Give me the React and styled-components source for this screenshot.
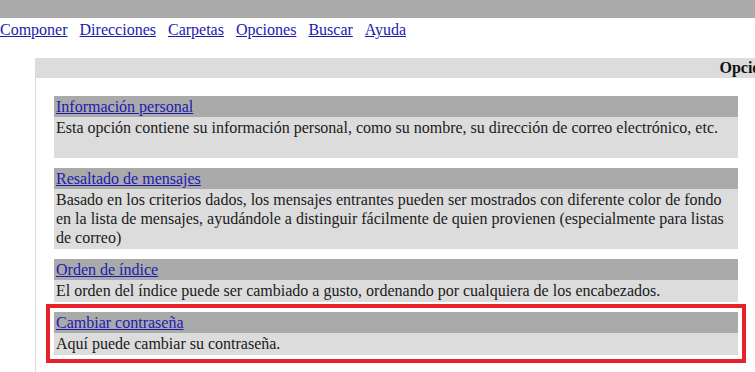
import React from "react";
import styled, { createGlobalStyle } from "styled-components";

const GlobalStyle = createGlobalStyle`
  html, body {
    margin: 0;
    padding: 0;
    background: #ffffff;
    overflow: hidden;
  }
  body {
    font-family: "Liberation Serif", "Times New Roman", serif;
    font-size: 16px;
    color: #1a1a1a;
  }
`;

/* ================= TOP ================= */

const TopBar = styled.div`
  height: 18px;
  background: #ababab;
`;

const Nav = styled.nav`
  display: flex;
  gap: 12px;
  margin-top: 2px;
  line-height: 19px;
`;

const Link = styled.a`
  color: #1c1ab0;
  text-decoration: underline;
  cursor: pointer;
  white-space: nowrap;
`;

/* ================= PANEL ================= */

const Panel = styled.div`
  margin: 19px 0 0 35px;
  width: 1430px;
  border-left: 1px solid #dcdcdc;
`;

const PanelTitle = styled.div`
  background: #dcdcdc;
  height: 20px;
  line-height: 20px;
  text-align: center;
  font-weight: bold;
  color: #111;
`;

const List = styled.div`
  display: flex;
  flex-direction: column;
  gap: 10px;
  width: 684px;
  padding: 18px 0 40px 18px;
`;

const Section = styled.div`
  outline: ${({ $active }) => ($active ? "4px solid #e8212b" : "none")};
  outline-offset: 4px;
`;

const SectionHead = styled.div`
  background: #aaaaaa;
  padding: 1px 2px 1px;
  line-height: 19px;
`;

const SectionBody = styled.div`
  background: #dcdcdc;
  padding: 1px 2px 2px;
  line-height: 19px;
  min-height: ${({ $tall }) => ($tall ? "38px" : "auto")};
`;

const items = [
  {
    title: "Información personal",
    text: "Esta opción contiene su información personal, como su nombre, su dirección de correo electrónico, etc.",
    tall: true,
  },
  {
    title: "Resaltado de mensajes",
    text: "Basado en los criterios dados, los mensajes entrantes pueden ser mostrados con diferente color de fondo en la lista de mensajes, ayudándole a distinguir fácilmente de quien provienen (especialmente para listas de correo)",
  },
  {
    title: "Orden de índice",
    text: "El orden del índice puede ser cambiado a gusto, ordenando por cualquiera de los encabezados.",
  },
  {
    title: "Cambiar contraseña",
    text: "Aquí puede cambiar su contraseña.",
    active: true,
  },
];

const navLinks = ["Componer", "Direcciones", "Carpetas", "Opciones", "Buscar", "Ayuda"];

const App = () => (
  <>
    <GlobalStyle />
    <TopBar />
    <Nav>
      {navLinks.map((l) => (
        <Link key={l}>{l}</Link>
      ))}
    </Nav>
    <Panel>
      <PanelTitle>Opciones</PanelTitle>
      <List>
        {items.map((it) => (
          <Section key={it.title} $active={it.active}>
            <SectionHead>
              <Link>{it.title}</Link>
            </SectionHead>
            <SectionBody $tall={it.tall}>{it.text}</SectionBody>
          </Section>
        ))}
      </List>
    </Panel>
  </>
);

export default App;
